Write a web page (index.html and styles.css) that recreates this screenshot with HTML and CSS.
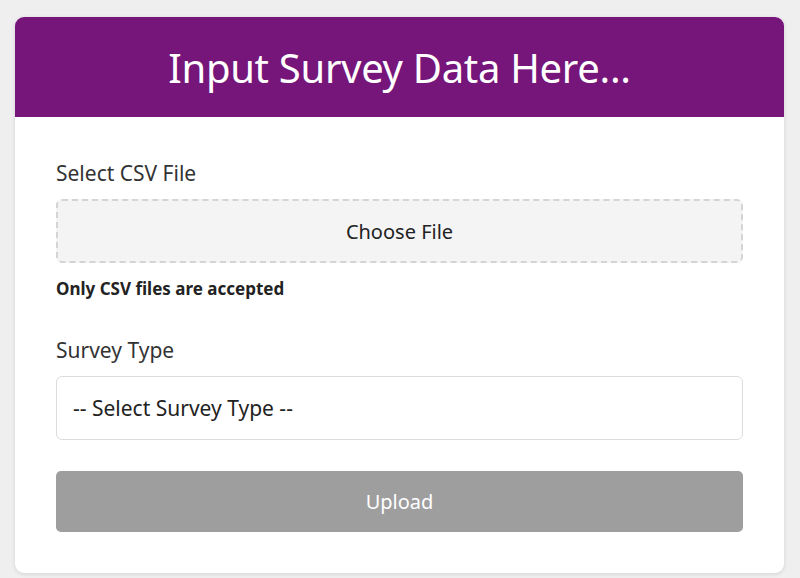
FILE: index.html
```html
<!DOCTYPE html>
<html>
<head>
<meta charset="utf-8">
<link rel="stylesheet" href="styles.css">
</head>
<body>
<div class="card">
  <div class="card-header"><h1>Input Survey Data Here...</h1></div>
  <div class="card-body">
    <div class="field">
      <label class="label">Select CSV File</label>
      <div class="file-box">Choose File</div>
      <div class="hint">Only CSV files are accepted</div>
    </div>
    <div class="field">
      <label class="label">Survey Type</label>
      <div class="select">-- Select Survey Type --</div>
    </div>
    <button class="upload">Upload</button>
  </div>
</div>
</body>
</html>
```
FILE: styles.css
```css
html, body {
  margin: 0;
  padding: 0;
  background: #efefef;
  font-family: "Noto Sans", "Open Sans", sans-serif;
}
body {
  padding: 17px 16px 5px 15px;
}
.card {
  background: #fff;
  border-radius: 9px;
  overflow: hidden;
  box-shadow: 0 1px 4px rgba(0,0,0,0.12);
}
.card-header {
  background: #76157a;
  height: 100px;
  display: flex;
  align-items: center;
  justify-content: center;
}
.card-header h1 {
  margin: 0;
  color: #fff;
  font-weight: 400;
  font-size: 40px;
  letter-spacing: -0.3px;
}
.card-body {
  padding: 43px 41px 41px;
  display: flex;
  flex-direction: column;
}
.field {
  display: flex;
  flex-direction: column;
}
.label {
  font-size: 21px;
  color: #333;
  line-height: 26px;
  margin-bottom: 13px;
}
.file-box {
  height: 60px;
  border: 2px dashed #d4d4d4;
  border-radius: 6px;
  background: #f4f4f4;
  display: flex;
  align-items: center;
  justify-content: center;
  font-size: 20px;
  color: #222;
}
.hint {
  margin-top: 15px;
  font-size: 17px;
  font-weight: 700;
  color: #222;
  line-height: 22px;
  margin-bottom: 37px;
}
.select {
  height: 62px;
  border: 1px solid #dcdcdc;
  border-radius: 6px;
  display: flex;
  align-items: center;
  padding-left: 16px;
  font-size: 21px;
  color: #222;
}
.upload {
  margin-top: 31px;
  height: 61px;
  border: none;
  border-radius: 5px;
  background: #9e9e9e;
  color: #fff;
  font-family: inherit;
  font-size: 20px;
}
```
